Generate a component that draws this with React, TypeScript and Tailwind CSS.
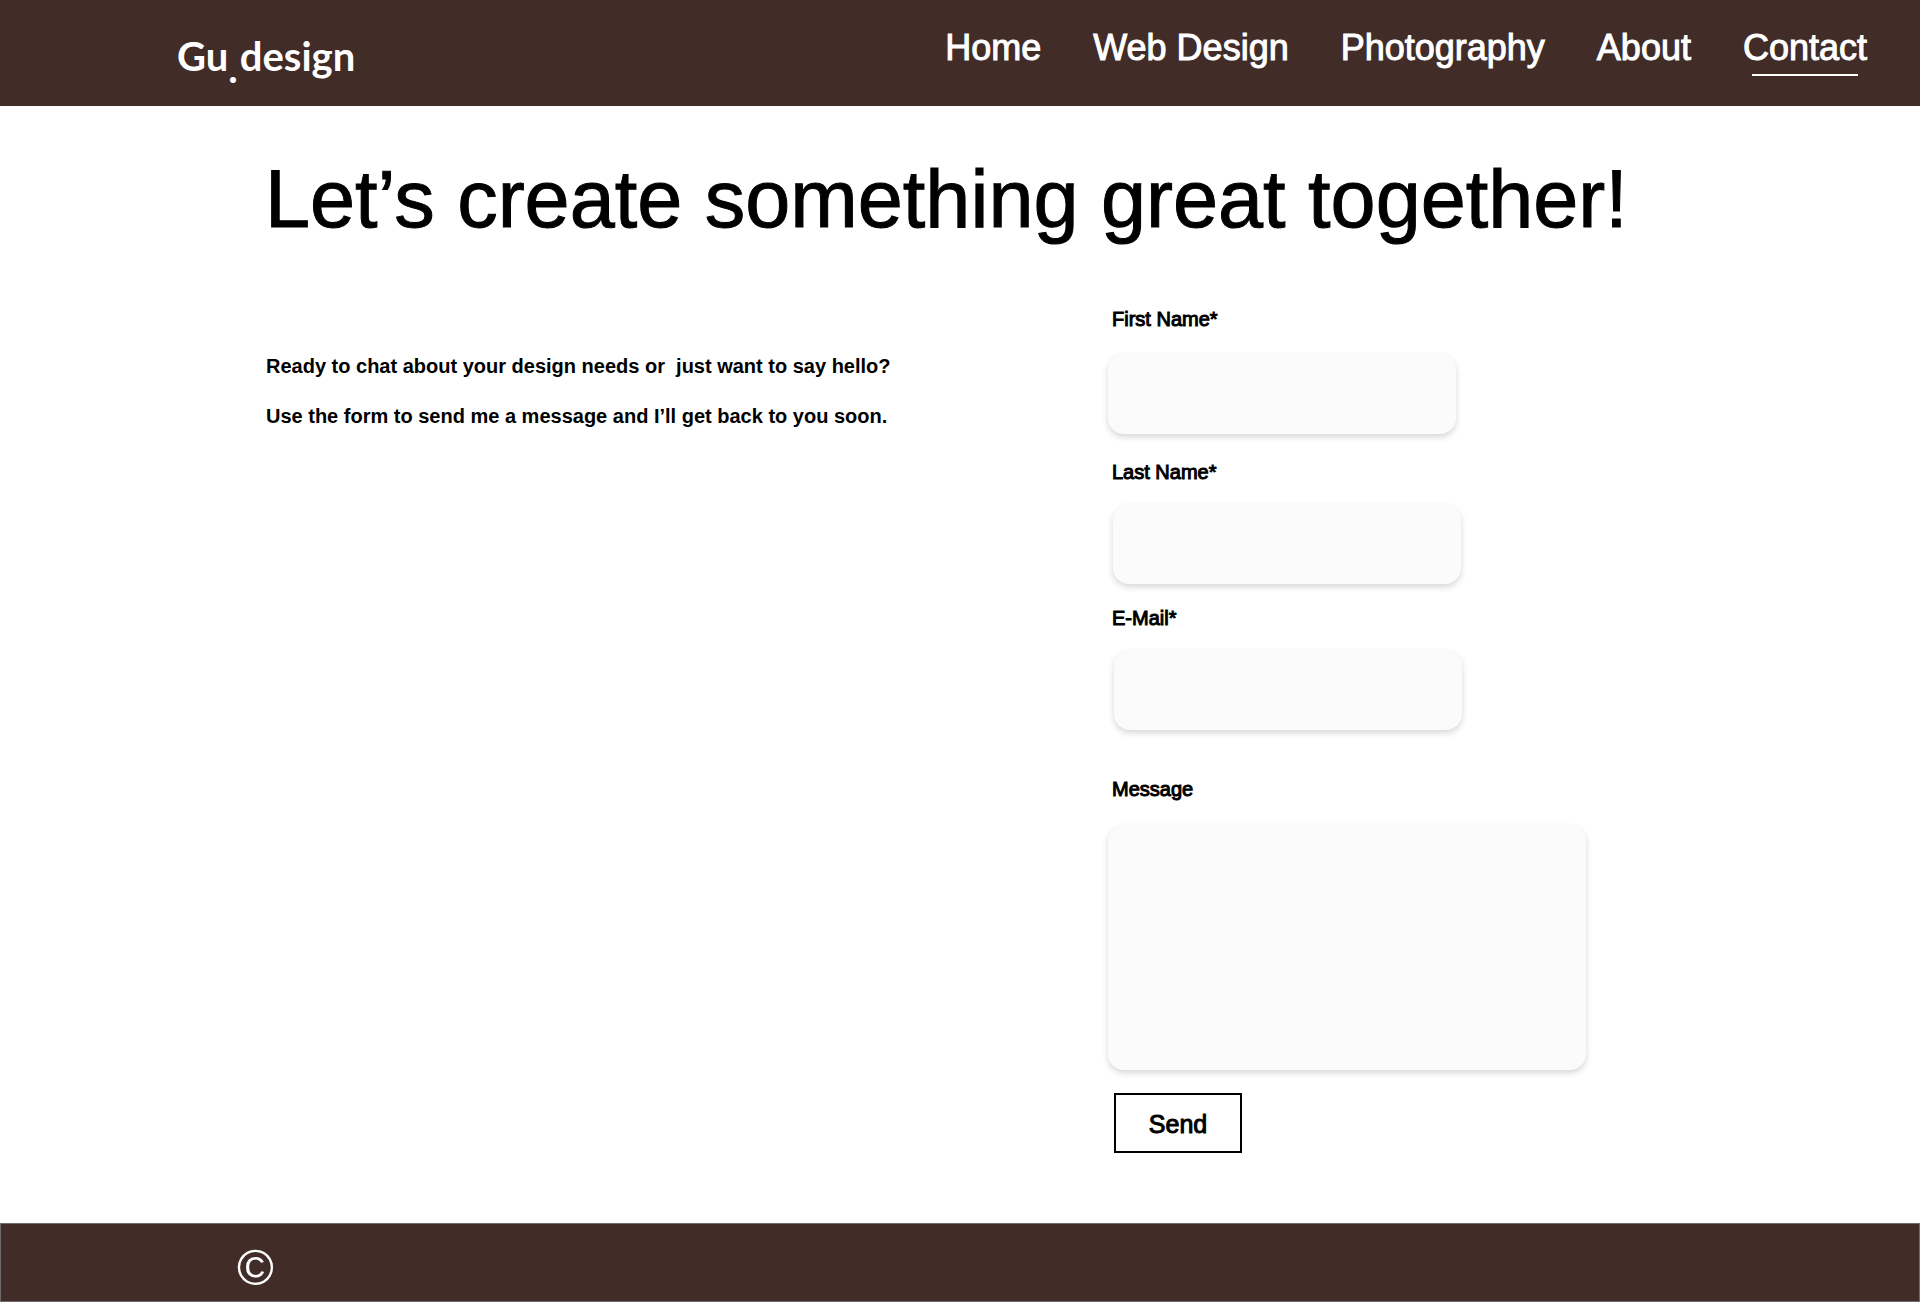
import React from "react";

const links = ["Home", "Web Design", "Photography", "About", "Contact"];
const active = "Contact";

const fieldStyle =
  "block max-w-full rounded-2xl bg-[#fbfbfb] px-4 shadow-[0_3px_6px_rgba(0,0,0,0.16)] outline-none";

type FieldProps = {
  id: string;
  label: string;
  type?: string;
  className?: string;
  gap?: string;
};

function Label({ id, children }: { id: string; children: React.ReactNode }) {
  return (
    <label htmlFor={id} className="block pl-1 text-[20px] leading-6 [-webkit-text-stroke:1px_black]">
      {children}
    </label>
  );
}

function Field({ id, label, type = "text", className = "", gap = "mt-5" }: FieldProps) {
  return (
    <div>
      <Label id={id}>{label}</Label>
      <div className={gap}>
        <input id={id} name={id} type={type} required className={`${fieldStyle} h-20 w-[348px] ${className}`} />
      </div>
    </div>
  );
}

function Header() {
  return (
    <header className="flex min-h-[106px] flex-wrap items-start justify-between bg-[#412c28] pr-[53px] pl-[177px] text-white">
      <a href="#home" className="flex pt-8 font-['Lato',sans-serif] text-[40px] leading-[48px] font-bold">
        <span>Gu</span>
        <span className="pt-3 pr-0.5">.</span>
        <span>design</span>
      </a>
      <nav className="flex flex-wrap gap-x-[52px] pt-7">
        {links.map((link) => (
          <a
            key={link}
            href={`#${link.toLowerCase().replace(" ", "-")}`}
            aria-current={link === active ? "page" : undefined}
            className="flex flex-col items-center text-[36px] leading-10 [-webkit-text-stroke:1px_white]"
          >
            {link}
            {link === active && <span className="mt-1.5 h-0.5 w-[106px] bg-white" />}
          </a>
        ))}
      </nav>
    </header>
  );
}

export default function App() {
  return (
    <div className="flex min-h-screen flex-col bg-white font-['Liberation_Sans',Arial,sans-serif] text-black">
      <Header />
      <main className="flex-1 pb-16">
        <h1 className="pt-[47px] pl-[265px] text-[81px] leading-[92px] [-webkit-text-stroke:1px_black]">
          Let’s create something great together!
        </h1>
        <div className="grid grid-cols-[842fr_812fr] pt-[62px] pl-[266px]">
          <div className="pt-[34px] text-[20px] leading-[50px] font-bold whitespace-pre-wrap">
            <p>{"Ready to chat about your design needs or  just want to say hello?"}</p>
            <p>Use the form to send me a message and I’ll get back to you soon.</p>
          </div>
          <form onSubmit={(event) => event.preventDefault()}>
            <Field id="first-name" label="First Name*" gap="mt-[23px]" />
            <div className="mt-[26px]">
              <Field id="last-name" label="Last Name*" className="ml-[5px]" />
            </div>
            <div className="mt-[22px]">
              <Field id="email" label="E-Mail*" type="email" className="ml-1.5" />
            </div>
            <div className="mt-[47px]">
              <Label id="message">Message</Label>
              <div className="mt-6">
                <textarea id="message" name="message" className={`${fieldStyle} h-[245px] w-[478px] resize-none py-4`} />
              </div>
            </div>
            <button
              type="submit"
              className="mt-[23px] ml-1.5 h-[60px] w-32 border-2 border-black pt-1 text-[25px] [-webkit-text-stroke:1px_black]"
            >
              Send
            </button>
          </form>
        </div>
      </main>
      <footer className="flex h-[79px] items-center border border-[#6b6b6b] bg-[#412c28] pl-[236px] text-white">
        <span className="pt-2.5 text-[50px] leading-[56px]">©</span>
      </footer>
    </div>
  );
}
